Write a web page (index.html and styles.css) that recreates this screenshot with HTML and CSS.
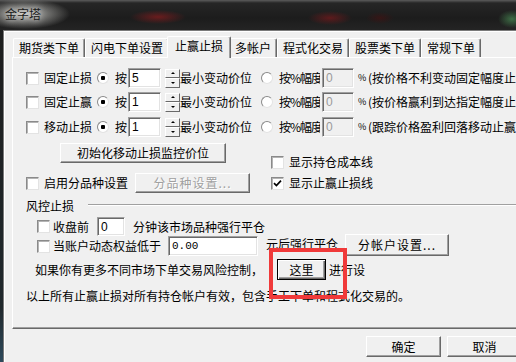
FILE: index.html
```html
<!DOCTYPE html>
<html>
<head>
<meta charset="utf-8">
<title>金字塔</title>
<link rel="stylesheet" href="styles.css">
</head>
<body>
<div class="win">
  <div class="titlebar"><span class="title">金字塔</span></div>
  <div class="client">
    <div class="tabs">
      <span class="tab">期货类下单</span>
      <span class="tab">闪电下单设置</span>
      <span class="tab on">止赢止损</span>
      <span class="tab">多帐户</span>
      <span class="tab">程式化交易</span>
      <span class="tab">股票类下单</span>
      <span class="tab">常规下单</span>
    </div>
    <div class="panel">
      <div class="stops">
        <div class="row">
          <span class="chk"></span><span class="lbl">固定止损</span>
          <span class="rad on"></span><span class="an">按</span>
          <span class="edit tick">5</span><span class="spin"><i class="up"></i><i class="dn"></i></span>
          <span class="unit">最小变动价位</span>
          <span class="rad"></span><span class="pct">按%幅度</span>
          <span class="edit off">0</span><span class="pc">%</span>
          <span class="note">(按价格不利变动固定幅度止损)</span>
        </div>
        <div class="row">
          <span class="chk"></span><span class="lbl">固定止赢</span>
          <span class="rad on"></span><span class="an">按</span>
          <span class="edit tick">1</span><span class="spin"><i class="up"></i><i class="dn"></i></span>
          <span class="unit">最小变动价位</span>
          <span class="rad"></span><span class="pct">按%幅度</span>
          <span class="edit off">0</span><span class="pc">%</span>
          <span class="note">(按价格赢利到达指定幅度止赢)</span>
        </div>
        <div class="row r3">
          <span class="chk"></span><span class="lbl">移动止损</span>
          <span class="rad on"></span><span class="an">按</span>
          <span class="edit tick">1</span><span class="spin"><i class="up"></i><i class="dn"></i></span>
          <span class="unit">最小变动价位</span>
          <span class="rad"></span><span class="pct">按%幅度</span>
          <span class="edit off">0</span><span class="pc">%</span>
          <span class="note">(跟踪价格盈利回落移动止赢)</span>
        </div>
      </div>

      <div class="mid">
        <div class="left">
          <span class="btn init">初始化移动止损监控价位</span>
          <div class="row sub">
            <span class="chk"></span><span class="lbl">启用分品种设置</span>
            <span class="btn dis kinds">分品种设置...</span>
          </div>
        </div>
        <div class="right">
          <div class="row"><span class="chk"></span><span class="lbl">显示持仓成本线</span></div>
          <div class="row"><span class="chk"><svg width="9" height="9" viewBox="0 0 9 9"><path d="M1 4.2l2.4 2.4L8 1.6" stroke="#000" stroke-width="1.7" fill="none"/></svg></span><span class="lbl">显示止赢止损线</span></div>
        </div>
      </div>

      <div class="group"><span class="gtitle">风控止损</span><span class="gline"></span></div>
      <div class="row risk r1">
        <span class="chk"></span><span class="lbl">收盘前</span>
        <span class="edit mins">0</span>
        <span class="txt">分钟该市场品种强行平仓</span>
      </div>
      <div class="row risk r2">
        <span class="chk"></span><span class="lbl">当账户动态权益低于</span>
        <span class="edit money">0.00</span>
        <span class="txt up">元后强行平仓</span>
        <span class="btn acct">分帐户设置...</span>
      </div>
      <div class="row more">
        <span>如果你有更多不同市场下单交易风险控制，</span>
        <span class="btn here">这里</span>
        <span class="after">进行设</span>
      </div>
      <div class="row tail">以上所有止赢止损对所有持仓帐户有效，包含手工下单和程式化交易的。</div>

      <div class="mark"></div>
    </div>
    <div class="footer">
      <span class="btn ok">确定</span>
      <span class="btn ok">取消</span>
    </div>
  </div>
</div>
</body>
</html>
```

FILE: styles.css
```css
*{
	box-sizing:border-box;
	}
body{
	margin:0;
	background:#1a1e21;
	font-family:"Noto Sans CJK SC","Liberation Sans",sans-serif;
	font-size:12px;
	line-height:14px;
	color:#000;
	overflow:hidden;
	white-space:nowrap;
	}
.win{
	width:560px;
	height:362px;
	background:linear-gradient(#1c1c1c, #20282c 85%, #2e4a5c);
	}
.titlebar{
	height:30px;
	padding:7px 0 0 5px;
	background:
		radial-gradient(ellipse 46px 15px at 24px 14px, rgba(215,215,210,.9), rgba(215,215,210,0)),
		radial-gradient(ellipse 28px 7px at 158px 17px, rgba(120,28,30,.85), rgba(120,28,30,0)),
		radial-gradient(ellipse 22px 7px at 330px 18px, rgba(110,26,28,.8), rgba(110,26,28,0)),
		radial-gradient(ellipse 14px 6px at 380px 18px, rgba(60,20,20,.8), rgba(60,20,20,0)),
		radial-gradient(ellipse 14px 9px at 512px 19px, rgba(70,130,80,.8), rgba(70,130,80,0)),
		linear-gradient(#5c5c5c, #262626 3px, #1c1c1c 60%, #242424);
	}
.title{
	color:#1a1a1a;
	text-shadow:0 0 6px #eee;
	}
.client{
	margin-left:3px;
	height:332px;
	padding:5px 0 0 8px;
	background:#f0f0f0;
	border-left:1px solid #7a7a7a;
	border-top:1px solid #7a7a7a;
	box-shadow:inset 1px 1px #fff;
	}

/* tabs */
.tabs{
	display:flex;
	align-items:flex-end;
	height:21px;
	margin-left:1px;
	}
.tab{
	display:flex;
	align-items:center;
	height:19px;
	padding:0 5px 1px;
	background:#f0f0f0;
	border-top:1px solid #fff;
	border-left:1px solid #fff;
	border-right:1px solid #696969;
	border-radius:2px 2px 0 0;
	box-shadow:inset -1px 0 #a0a0a0;
	}
.tab.on{
	position:relative;
	z-index:1;
	height:22px;
	margin:0 -2px -1px;
	padding:0 7px 3px;
	}

/* panel */
.panel{
	position:relative;
	width:530px;
	height:272px;
	padding:0 0 0 13px;
	background:#f0f0f0;
	border-top:1px solid #fff;
	border-left:1px solid #fff;
	border-bottom:1px solid #696969;
	box-shadow:inset 0 -1px #a0a0a0;
	}
.row{
	display:flex;
	align-items:center;
	height:20px;
	}
.stops{
	display:flex;
	flex-direction:column;
	gap:4px;
	padding-top:10px;
	}
.stops .r3{
	margin-top:1px;
	}

.chk{
	display:flex;
	align-items:center;
	justify-content:center;
	width:13px;
	height:13px;
	margin-right:5px;
	background:#fff;
	border:1px solid;
	border-color:#8a8a8a #e3e3e3 #e3e3e3 #8a8a8a;
	box-shadow:inset 1px 1px #b4b4b4;
	}
.rad{
	width:12px;
	height:12px;
	margin-left:5px;
	border-radius:50%;
	background:#fff;
	border:1px solid;
	border-color:#8a8a8a #e3e3e3 #e3e3e3 #8a8a8a;
	}
.rad.on{
	background:radial-gradient(circle, #000 0 2px, #fff 2.5px);
	}
.an{
	margin-left:6px;
	}
.edit{
	display:flex;
	align-items:center;
	height:20px;
	padding-left:3px;
	background:#fff;
	border:1px solid;
	border-color:#a0a0a0 #fff #fff #a0a0a0;
	box-shadow:inset 1px 1px #696969, inset -1px -1px #e3e3e3;
	font-family:"Liberation Sans",sans-serif;
	font-size:12px;
	}
.edit.tick{
	width:33px;
	margin-left:1px;
	}
.edit.off{
	width:32px;
	margin-left:2px;
	background:#f0f0f0;
	color:#9a9a9a;
	}
.spin{
	display:flex;
	flex-direction:column;
	width:15px;
	height:19px;
	margin-left:4px;
	}
.spin i{
	flex:1;
	display:flex;
	align-items:center;
	justify-content:center;
	background:#f0f0f0;
	border:1px solid;
	border-color:#fff #696969 #696969 #fff;
	}
.spin i:before{
	content:"";
	border-left:2px solid transparent;
	border-right:2px solid transparent;
	}
.spin .up:before{
	border-bottom:2px solid #000;
	}
.spin .dn:before{
	border-top:2px solid #000;
	}
.unit{
	width:76px;
	}
.pct{
	width:41px;
	margin-left:6px;
	overflow:hidden;
	letter-spacing:-1px;
	}
.pc{
	width:8px;
	margin-left:4px;
	font-size:9px;
	}
.note{
	margin-left:2px;
	}

/* buttons */
.btn{
	display:flex;
	align-items:center;
	justify-content:center;
	height:20px;
	background:#f0f0f0;
	border:1px solid;
	border-color:#fff #696969 #696969 #fff;
	box-shadow:inset -1px -1px #a0a0a0;
	}
.btn.dis{
	color:#a0a0a0;
	text-shadow:1px 1px #fff;
	letter-spacing:1px;
	}

.mid{
	display:flex;
	margin-top:6px;
	}
.left{
	width:245px;
	}
.init{
	width:166px;
	margin-left:34px;
	}
.sub{
	margin-top:10px;
	}
.kinds{
	width:115px;
	margin-left:7px;
	}
.right{
	display:flex;
	flex-direction:column;
	gap:1px;
	padding-top:9px;
	}

.group{
	display:flex;
	height:14px;
	margin-top:6px;
	}
.gline{
	flex:1;
	height:2px;
	margin:5px 0 0 14px;
	border-top:1px solid #a0a0a0;
	border-bottom:1px solid #fff;
	}
.risk{
	padding-left:11px;
	}
.risk.r1{
	height:19px;
	margin-top:4px;
	}
.risk .chk{
	margin-right:3px;
	}
.mins{
	width:28px;
	height:19px;
	margin-left:8px;
	}
.money{
	width:90px;
	margin-left:7px;
	font-family:"Liberation Mono",monospace;
	font-size:11px;
	}
.txt{
	margin-left:8px;
	}
.txt.up{
	margin-bottom:5px;
	}
.acct{
	width:104px;
	height:22px;
	margin:-3px 0 0 7px;
	letter-spacing:1px;
	}
.more{
	height:21px;
	margin-top:3px;
	padding-left:9px;
	}
.here{
	width:49px;
	height:21px;
	margin-left:14px;
	border-color:#000;
	box-shadow:inset 1px 1px #fff, inset -1px -1px #696969, inset -2px -2px #a0a0a0;
	}
.after{
	margin-left:3px;
	}
.tail{
	height:14px;
	margin-top:9px;
	}
.mark{
	position:absolute;
	left:256px;
	top:190px;
	width:78px;
	height:51px;
	border:4px solid #f03a3a;
	}

.footer{
	display:flex;
	gap:6px;
	margin-top:7px;
	padding-left:354px;
	}
.btn.ok{
	width:75px;
	height:21px;
	}
```
